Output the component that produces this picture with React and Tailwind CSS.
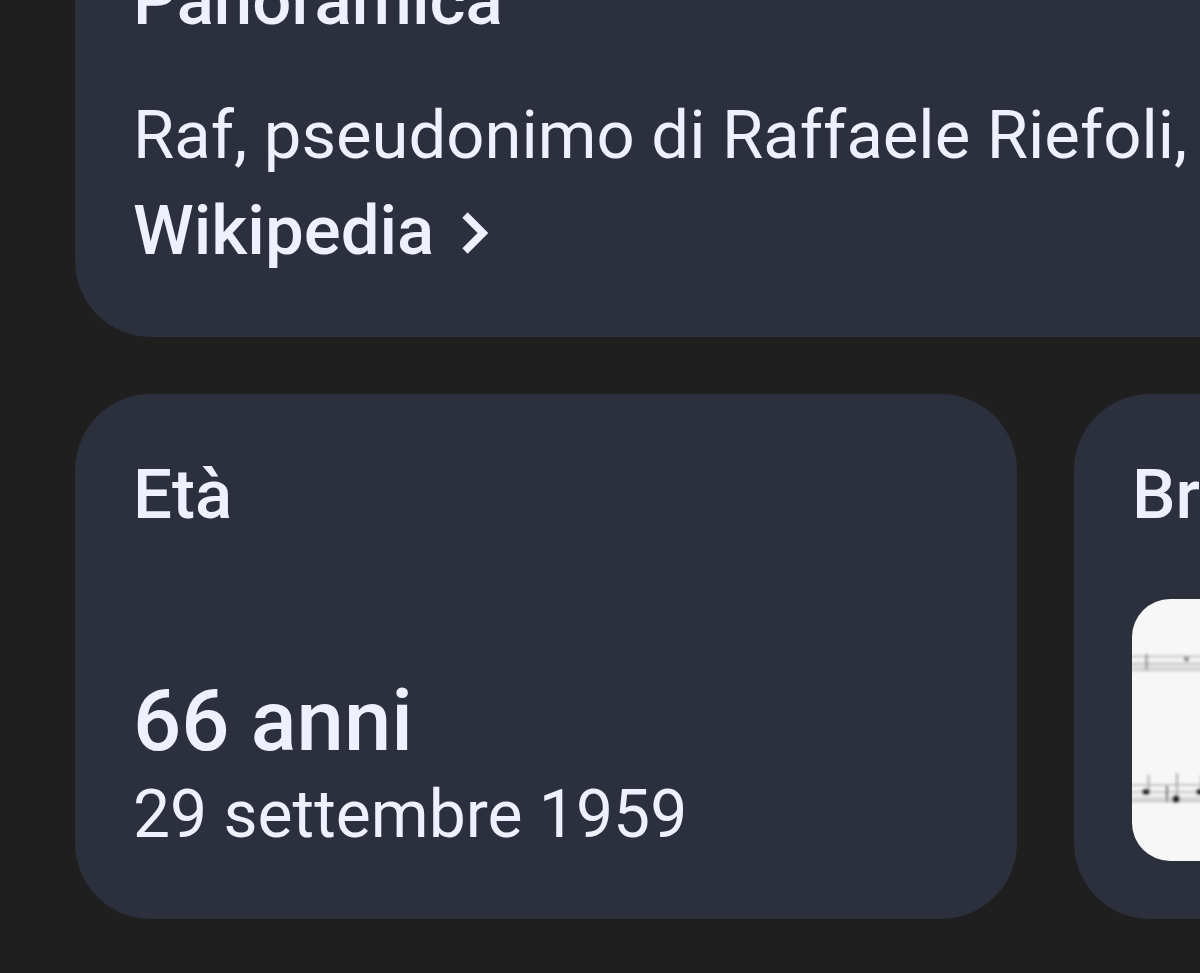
import { ChevronRight } from 'lucide-react';

const Card = ({ title, className = '', children }) => (
  <section className={`flex flex-col bg-[#2c2f3c] px-[58px] pb-[58px] pt-[59px] ${className}`}>
    <h2 className="text-[69px] font-medium leading-[84px]">{title}</h2>
    {children}
  </section>
);

const SheetMusic = () => (
  <svg
    viewBox="0 0 826 262"
    role="img"
    aria-label="Spartito"
    className="mt-[62px] h-[262px] w-[826px] rounded-[38px] bg-[#f7f7f7]"
  >
    <defs>
      <filter id="soft" x="-5%" y="-20%" width="110%" height="140%">
        <feGaussianBlur stdDeviation="1.4" />
      </filter>
    </defs>
    <g filter="url(#soft)">
      {/* Upper staff */}
      <rect x="-4" y="64" width="834" height="8" fill="#e2e2e2" />
      <path d="M-4 57.500H830M-4 64.500H830M-4 71H830" stroke="#c4c4c4" strokeWidth="2" />
      <path d="M14.500 55V71" stroke="#888" strokeWidth="2" />
      <circle cx="54.500" cy="60" r="2.500" fill="#888" />

      {/* Lower staff */}
      <rect x="-4" y="197" width="834" height="6" fill="#dedede" />
      <path d="M-4 186H830M-4 193H830M-4 202H830" stroke="#c0c0c0" strokeWidth="2" />
      <path d="M35 187V203" stroke="#666" strokeWidth="2" />
      <path d="M16.500 176V192M45 174V199M69.500 176V192" stroke="#aaa" strokeWidth="2" />
      <ellipse cx="14" cy="193" rx="4" ry="3" fill="#222" />
      <ellipse cx="44" cy="200" rx="4" ry="3.500" fill="#1a1216" />
      <ellipse cx="68" cy="193" rx="4" ry="3" fill="#222" />
    </g>
  </svg>
);

export default function App() {
  return (
    <main className="flex min-h-screen flex-col gap-[57px] overflow-hidden bg-[#1f1f1f] pb-[54px] pl-[75px] font-['Roboto',sans-serif] text-[#eeefff]">
      {/* Scrolled partly out of view */}
      <Card title="Panoramica" className="-mt-[100px] rounded-l-[76px]">
        <p className="mt-[44px] whitespace-nowrap text-[67px] leading-[96px]">
          Raf, pseudonimo di Raffaele Riefoli,
        </p>
        <a href="#wikipedia" className="flex items-center gap-1 self-start text-[69px] font-medium leading-[96px]">
          Wikipedia
          <ChevronRight className="mt-1" size={72} strokeWidth={2.5} strokeLinecap="butt" strokeLinejoin="miter" aria-hidden="true" />
        </a>
      </Card>

      <div className="flex gap-[57px]">
        <Card title="Età" className="w-[942px] shrink-0 rounded-[76px]">
          <div className="mt-auto">
            <p className="text-[85px] font-medium leading-[96px]">66 anni</p>
            <p className="text-[66px] leading-[92px]">29 settembre 1959</p>
          </div>
        </Card>
        <Card title="Brani" className="w-[942px] shrink-0 rounded-[76px]">
          <SheetMusic />
        </Card>
      </div>
    </main>
  );
}
